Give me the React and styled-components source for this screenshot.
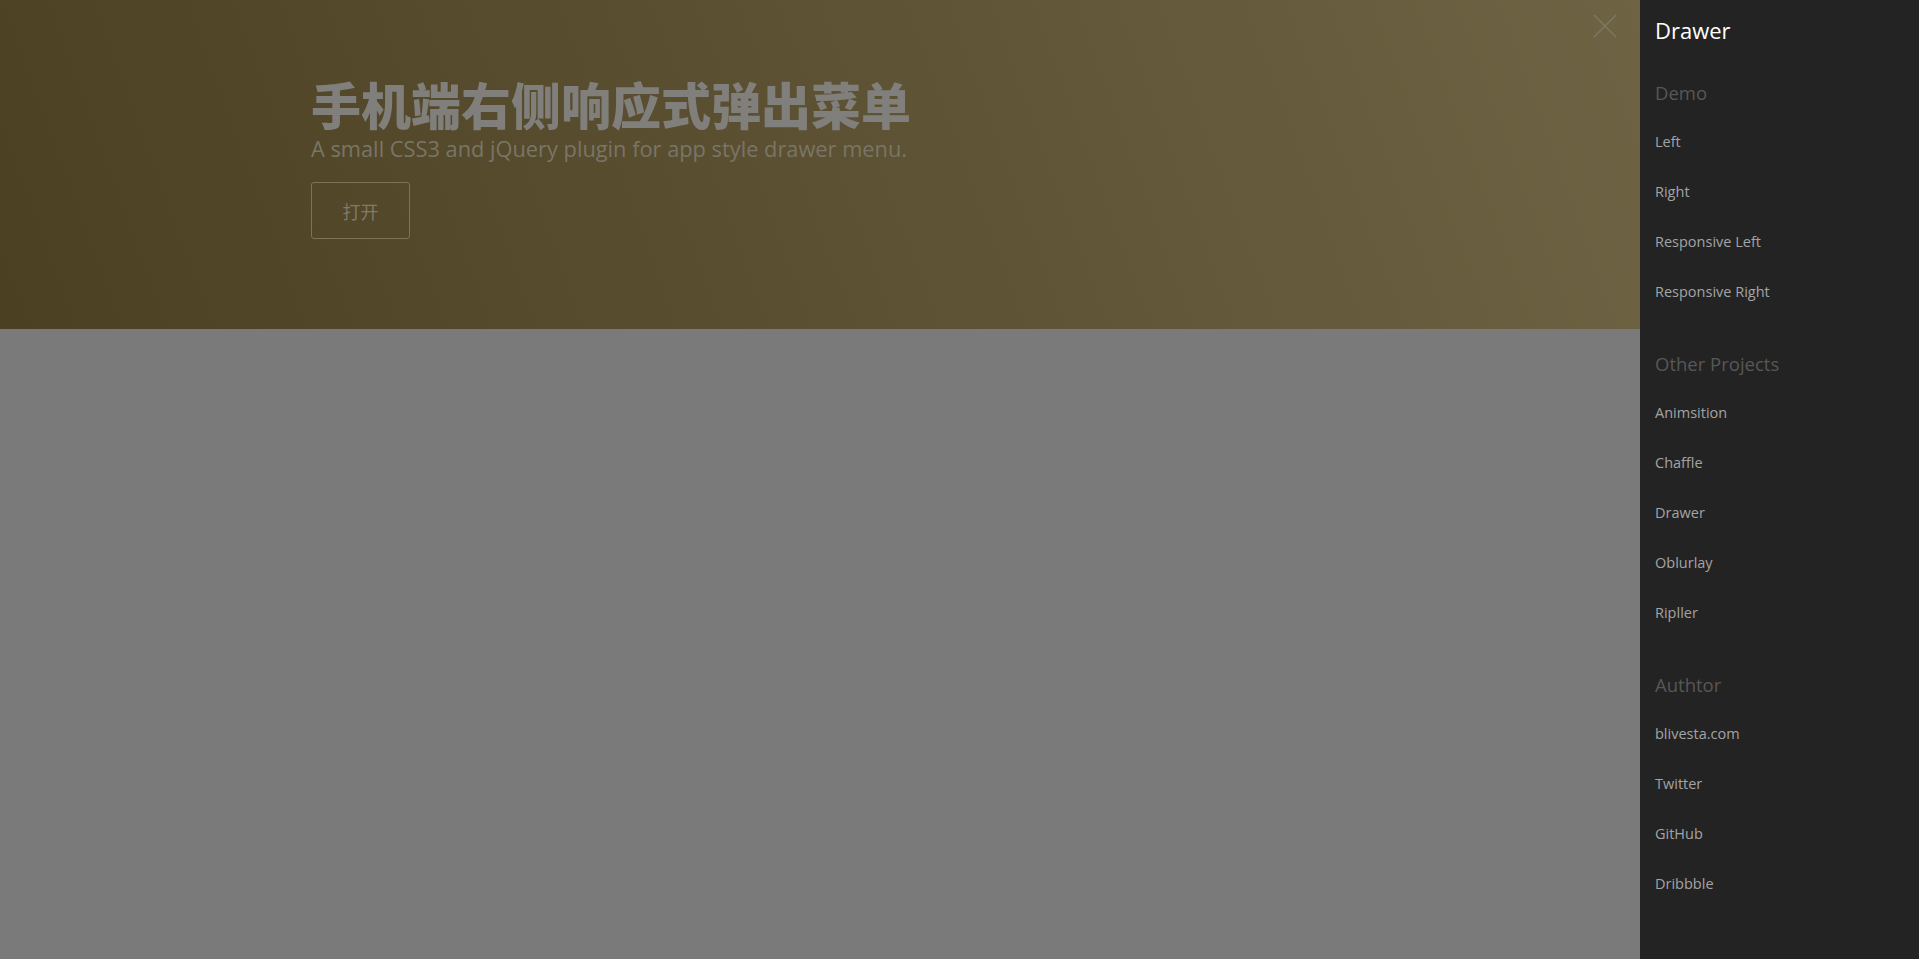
import React from 'react';
import styled, { createGlobalStyle } from 'styled-components';

const GlobalStyle = createGlobalStyle`
  html, body {
    margin: 0;
    padding: 0;
    height: 100%;
    overflow: hidden;
  }
  body {
    font-family: "Open Sans", "Noto Sans CJK SC", sans-serif;
    background: #7a7a7a;
  }
  #root {
    height: 100%;
  }
`;

const Page = styled.div`
  display: flex;
  height: 959px;
  width: 1919px;
`;

const Main = styled.div`
  flex: 1;
  position: relative;
  background: #7a7a7a;
`;

const Hero = styled.header`
  height: 329px;
  box-sizing: border-box;
  padding: 75px 0 0 311px;
  background: linear-gradient(70deg, #4b4022 0%, #5a4f31 45%, #6e6444 100%);
`;

const Title = styled.h1`
  margin: 0;
  font-family: "Noto Sans CJK SC", sans-serif;
  font-size: 50px;
  font-weight: 900;
  line-height: 56px;
  color: #807f7b;
`;

const Lead = styled.p`
  margin: 4px 0 0;
  font-size: 21.8px;
  line-height: 28px;
  color: #7a7566;
`;

const OpenButton = styled.button`
  margin-top: 19px;
  width: 99px;
  height: 57px;
  background: transparent;
  border: 1px solid #7c7458;
  border-radius: 3px;
  color: #7e7a6c;
  font-family: "Noto Sans CJK SC", sans-serif;
  font-size: 18px;
  cursor: pointer;
`;

const CloseButton = styled.button`
  position: absolute;
  top: 13px;
  right: 22px;
  width: 26px;
  height: 26px;
  padding: 0;
  border: none;
  background: transparent;
  cursor: pointer;
`;

const Drawer = styled.nav`
  width: 279px;
  box-sizing: border-box;
  padding: 14px 15px 0;
  background: #232323;
`;

const DrawerTitle = styled.div`
  font-size: 22px;
  line-height: 32px;
  color: #ffffff;
`;

const Section = styled.div`
  margin-top: 33px;
`;

const SectionTitle = styled.div`
  font-size: 18.5px;
  line-height: 28px;
  color: #575757;
  margin-bottom: 10px;
`;

const Item = styled.a`
  display: block;
  font-size: 14.5px;
  line-height: 50px;
  height: 50px;
  color: #a3a3a3;
  text-decoration: none;
`;

const menu = [
  { title: 'Demo', items: ['Left', 'Right', 'Responsive Left', 'Responsive Right'] },
  { title: 'Other Projects', items: ['Animsition', 'Chaffle', 'Drawer', 'Oblurlay', 'Ripller'] },
  { title: 'Authtor', items: ['blivesta.com', 'Twitter', 'GitHub', 'Dribbble'] },
];

function CloseIcon() {
  return (
    <svg width="26" height="26" viewBox="0 0 26 26">
      <path d="M2 2 L24 24 M24 2 L2 24" stroke="#7d7763" strokeWidth="1.5" fill="none" />
    </svg>
  );
}

export default function App() {
  return (
    <>
      <GlobalStyle />
      <Page>
        <Main>
          <Hero>
            <Title>手机端右侧响应式弹出菜单</Title>
            <Lead>A small CSS3 and jQuery plugin for app style drawer menu.</Lead>
            <OpenButton>打开</OpenButton>
          </Hero>
          <CloseButton aria-label="close">
            <CloseIcon />
          </CloseButton>
        </Main>
        <Drawer>
          <DrawerTitle>Drawer</DrawerTitle>
          {menu.map(section => (
            <Section key={section.title}>
              <SectionTitle>{section.title}</SectionTitle>
              {section.items.map(item => (
                <Item key={item} href="#">{item}</Item>
              ))}
            </Section>
          ))}
        </Drawer>
      </Page>
    </>
  );
}
